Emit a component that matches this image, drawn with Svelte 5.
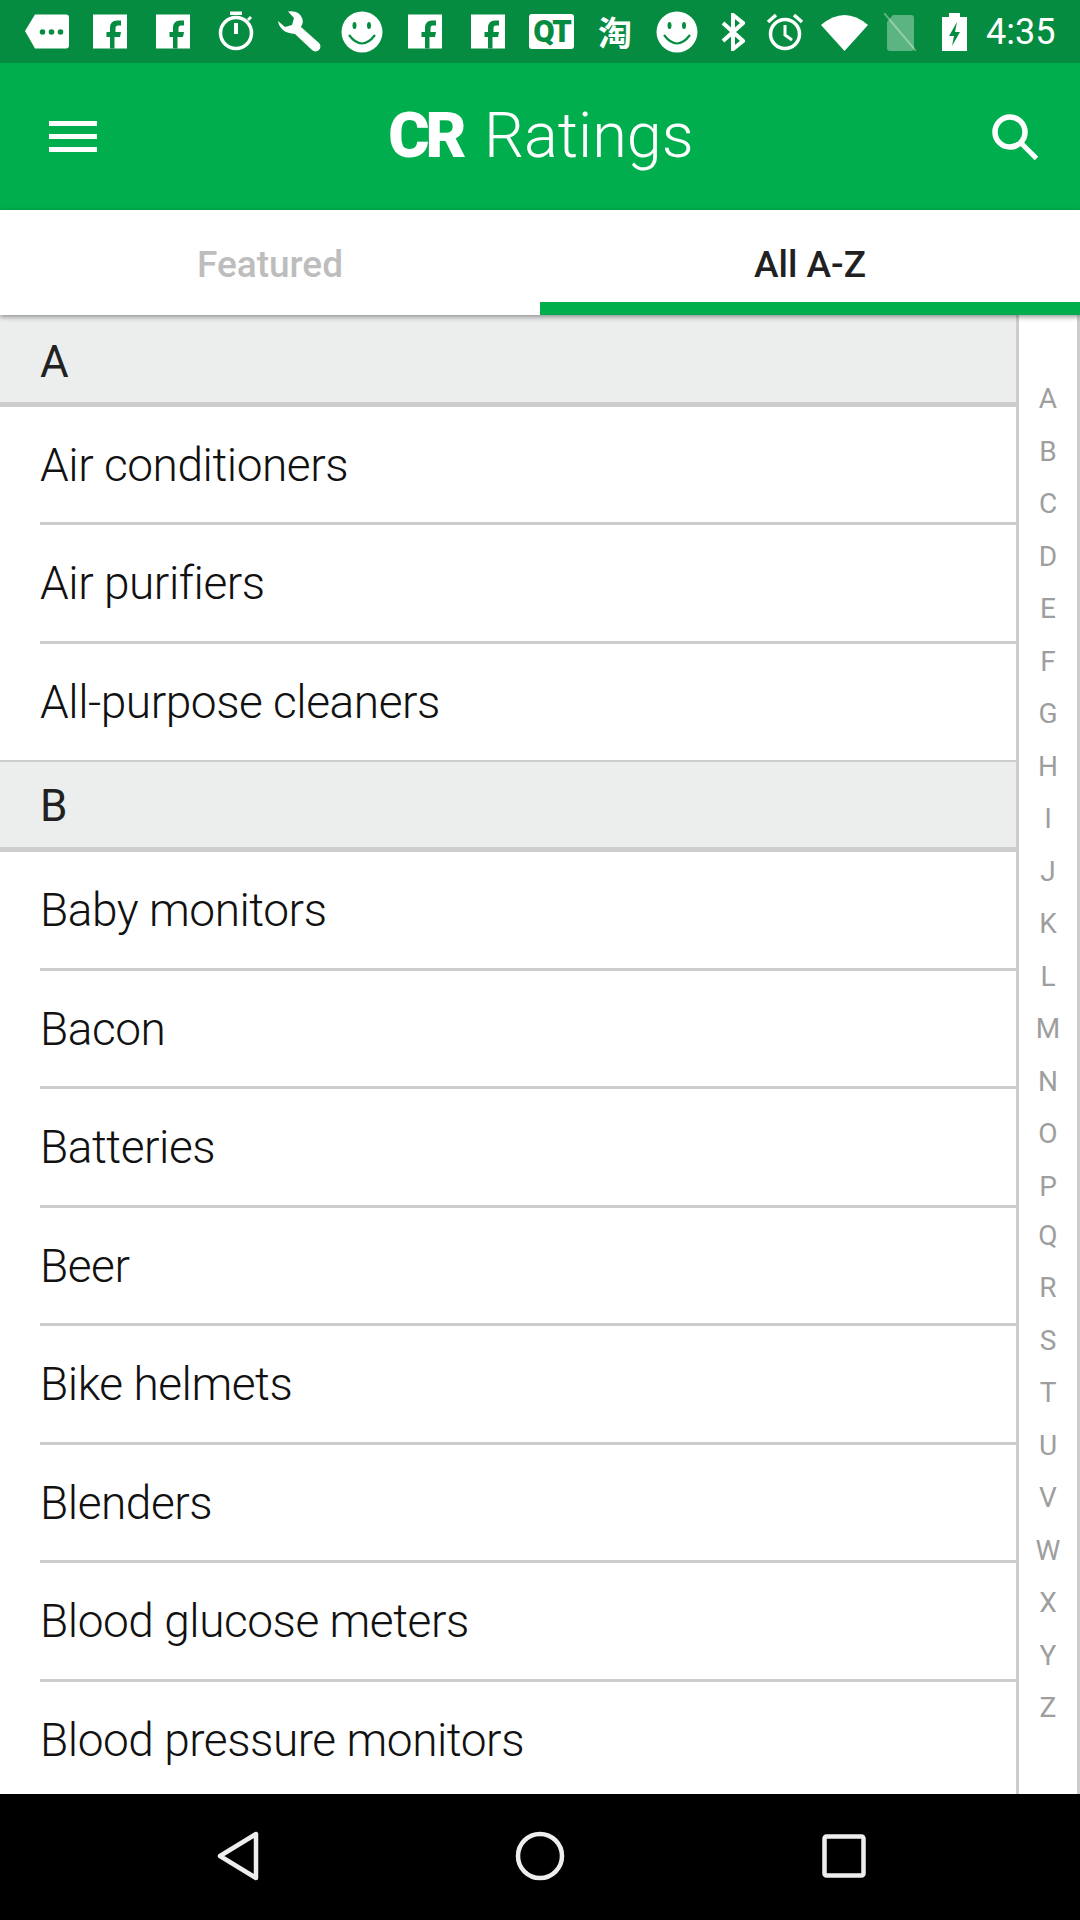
<script lang="ts">
	const letters = 'ABCDEFGHIJKLMNOPQRSTUVWXYZ'.split('');

	const sections = [
		{ title: 'A', items: ['Air conditioners', 'Air purifiers', 'All-purpose cleaners'] },
		{
			title: 'B',
			items: [
				'Baby monitors',
				'Bacon',
				'Batteries',
				'Beer',
				'Bike helmets',
				'Blenders',
				'Blood glucose meters',
				'Blood pressure monitors'
			]
		}
	];

	const fPath =
		'M22 38.5V27h-3.5v-5H22v-4q0-7.5 7-7.5h4v5h-3q-2.5 0-2.5 2.5V22H33l-1 5h-5.500V38.500Z';
</script>

{#snippet fb()}
	<svg class="slot" viewBox="0 0 44 44">
		<rect x="5" y="4.500" width="34" height="34" fill="#fff" />
		<path d={fPath} fill="#068c40" />
	</svg>
{/snippet}

{#snippet smile(cls = 'slot')}
	<svg class={cls} viewBox="0 0 44 44">
		<circle cx="22" cy="22" r="20.500" fill="#fff" />
		<ellipse cx="14.500" cy="15.500" rx="2" ry="3.500" fill="#068c40" />
		<ellipse cx="29" cy="15.500" rx="2" ry="3.500" fill="#068c40" />
		<path d="M9 25Q22 42 35 25" fill="none" stroke="#068c40" stroke-width="2.200" />
	</svg>
{/snippet}

<div class="screen">
	<div class="status">
		<svg class="slot" viewBox="0 0 44 44">
			<path d="M10 4.500h31a3 3 0 0 1 3 3v28a3 3 0 0 1-3 3H10L0 21Z" fill="#fff" />
			<circle cx="17.500" cy="22" r="2.800" fill="#068c40" />
			<circle cx="26.500" cy="22" r="2.800" fill="#068c40" />
			<circle cx="35.500" cy="22" r="2.800" fill="#068c40" />
		</svg>
		{@render fb()}
		{@render fb()}
		<svg class="slot" viewBox="0 0 44 44">
			<rect x="16" y="1.500" width="12" height="3.500" fill="#fff" />
			<path d="M33 9l3-3 2 2-3 3Z" fill="#fff" />
			<circle cx="22" cy="23" r="15.500" fill="none" stroke="#fff" stroke-width="3.500" />
			<rect x="20" y="13" width="4" height="11" fill="#fff" />
		</svg>
		<svg class="slot" viewBox="0 0 44 44">
			<path
				d="M11 1.500Q22 0 25 8q2 5-1 9l18 16a4.500 4.500 0 0 1-7 7L18 24Q3 23 1 11l7 6 7-2 2-7Z"
				fill="#fff"
			/>
		</svg>
		{@render smile()}
		{@render fb()}
		{@render fb()}
		<span class="qt">QT</span>
		<span class="tao">淘</span>
		{@render smile('slot smile-right')}
		<svg class="bt" viewBox="0 0 24 38">
			<path d="M2 10l20 18-10 8V2l10 8L2 28" fill="none" stroke="#fff" stroke-width="4" />
		</svg>
		<svg class="alarm" viewBox="0 0 38 38">
			<circle cx="19" cy="21" r="14.500" fill="none" stroke="#fff" stroke-width="3.500" />
			<path d="M19 12v10l7 5" fill="none" stroke="#fff" stroke-width="3" />
			<path d="M2 9l8-7M36 9l-8-7" stroke="#fff" stroke-width="3.500" />
		</svg>
		<svg class="wifi" viewBox="0 0 47 38">
			<path d="M0 12Q23.500-8 47 12L23.500 38Z" fill="#fff" />
		</svg>
		<svg class="sim" viewBox="0 0 32 38">
			<path d="M9 2h18a3 3 0 0 1 3 3v30a3 3 0 0 1-3 3H6a3 3 0 0 1-3-3V9Z" fill="#fff" opacity="0.35" />
			<path d="M0 0l32 38" stroke="#fff" stroke-width="2" opacity="0.35" />
		</svg>
		<svg class="batt" viewBox="0 0 25 38">
			<path d="M7 0h11v4h7v34H0V4h7Z" fill="#fff" />
			<path d="M15 9l-8 14h5l-2 10 8-14h-5Z" fill="#068c40" />
		</svg>
		<span class="time">4:35</span>
	</div>

	<header class="appbar">
		<button class="menu" aria-label="Menu">
			<span></span><span></span><span></span>
		</button>
		<div class="title"><b>CR</b> Ratings</div>
		<svg class="search" viewBox="0 0 48 48">
			<circle cx="19" cy="19" r="15" fill="none" stroke="#fff" stroke-width="5.500" />
			<path d="M29.500 29.500l16 16" stroke="#fff" stroke-width="5" />
		</svg>
	</header>

	<nav class="tabs">
		<div class="tab">Featured</div>
		<div class="tab active">All A-Z</div>
	</nav>

	<main class="content">
		<div class="list">
			{#each sections as section}
				<div class="section-head">{section.title}</div>
				{#each section.items as item}
					<div class="row"><span>{item}</span></div>
				{/each}
			{/each}
		</div>
		<aside class="index">
			{#each letters as letter}
				<span>{letter}</span>
			{/each}
		</aside>
	</main>

	<footer class="navbar">
		<svg class="back" viewBox="0 0 42 50">
			<path d="M39 3v44L3 25Z" fill="none" stroke="#eee" stroke-width="4.500" stroke-linejoin="round" />
		</svg>
		<svg class="home" viewBox="0 0 50 50">
			<circle cx="25" cy="25" r="22" fill="none" stroke="#eee" stroke-width="4.500" />
		</svg>
		<svg class="recent" viewBox="0 0 44 44">
			<rect x="2.500" y="2.500" width="39" height="39" rx="2" fill="none" stroke="#eee" stroke-width="4.500" />
		</svg>
	</footer>
</div>

<style>
	:global(body) {
		margin: 0;
		background: #fff;
	}

	.screen {
		width: 1080px;
		height: 1920px;
		display: flex;
		flex-direction: column;
		overflow: hidden;
		font-family: Roboto, 'Liberation Sans', sans-serif;
	}

	.status {
		height: 63px;
		flex: none;
		background: #068c40;
		display: flex;
		align-items: center;
		padding-left: 25px;
		color: #fff;
	}

	.slot {
		width: 44px;
		height: 44px;
		margin-right: 19px;
		flex: none;
	}

	.qt {
		width: 45px;
		height: 35px;
		margin-right: 24px;
		background: #fff;
		border-radius: 3px;
		color: #068c40;
		font-size: 31px;
		font-weight: 900;
		line-height: 35px;
		letter-spacing: -2px;
		text-align: center;
		overflow: hidden;
	}

	.tao {
		width: 34px;
		margin-right: 23px;
		font-family: 'Noto Sans CJK SC', sans-serif;
		font-size: 34px;
		font-weight: 700;
		line-height: 38px;
	}

	.smile-right {
		margin-right: 22px;
	}

	.bt {
		width: 24px;
		height: 38px;
		margin-right: 21px;
	}

	.alarm {
		width: 38px;
		height: 38px;
		margin-right: 17px;
	}

	.wifi {
		width: 47px;
		height: 38px;
		margin-right: 16px;
	}

	.sim {
		width: 32px;
		height: 38px;
		margin-right: 26px;
	}

	.batt {
		width: 25px;
		height: 38px;
		margin-right: 19px;
	}

	.time {
		font-size: 36px;
		line-height: 38px;
	}

	.appbar {
		height: 147px;
		flex: none;
		background: #00ae4d;
		display: flex;
		align-items: center;
		justify-content: space-between;
		padding: 0 41px 0 49px;
		color: #fff;
	}

	.menu {
		width: 48px;
		height: 31px;
		padding: 0;
		border: 0;
		background: none;
		display: flex;
		flex-direction: column;
		justify-content: space-between;
	}

	.menu span {
		height: 5px;
		background: #fff;
	}

	.title {
		font-size: 63px;
		font-weight: 300;
		line-height: 70px;
		margin: -2px 0 0 -6px;
	}

	.title b {
		font-weight: 900;
		letter-spacing: -4px;
		margin-right: 6px;
	}

	.search {
		width: 48px;
		height: 48px;
	}

	.tabs {
		height: 105px;
		flex: none;
		background: #fff;
		display: flex;
		box-shadow: 0 2px 5px rgba(0, 0, 0, 0.4);
		position: relative;
		z-index: 1;
	}

	.tab {
		flex: 1;
		box-sizing: border-box;
		padding-top: 33px;
		text-align: center;
		font-size: 37px;
		font-weight: 500;
		line-height: 44px;
		color: #bdbdbd;
	}

	.tab.active {
		color: #212121;
		border-bottom: 13px solid #00ae4d;
	}

	.content {
		flex: 1;
		min-height: 0;
		display: flex;
		overflow: hidden;
	}

	.list {
		width: 1016px;
		flex: none;
	}

	.section-head {
		height: 86.500px;
		background: #eceeed;
		border-bottom: 5px solid #cdcdcd;
		padding-left: 40px;
		font-size: 44px;
		line-height: 95px;
		color: #212121;
	}

	.row + .section-head {
		height: 85px;
		line-height: 88px;
	}

	.row {
		height: 118.500px;
		box-sizing: border-box;
		padding-left: 40px;
	}

	.row span {
		display: block;
		height: 100%;
		box-sizing: border-box;
		border-bottom: 3px solid #cdcdcd;
		font-size: 46px;
		font-weight: 300;
		letter-spacing: -0.45px;
		line-height: 117px;
		color: #111;
	}

	.row:has(+ .section-head) {
		padding-left: 0;
	}

	.row:has(+ .section-head) span {
		padding-left: 40px;
		border-bottom-width: 2px;
	}

	.index {
		flex: 1;
		border-left: 3px solid #cdcdcd;
		border-right: 3px solid #cdcdcd;
		padding-top: 58px;
		display: flex;
		flex-direction: column;
		align-items: center;
		font-size: 28px;
		color: #9e9e9e;
	}

	.index span {
		height: 52.500px;
		line-height: 52.500px;
	}

	.index span:nth-child(17) {
		margin-top: -3.500px;
	}

	.navbar {
		height: 126px;
		flex: none;
		background: #000;
		display: flex;
		align-items: center;
		position: relative;
		padding-left: 217px;
	}

	.back {
		width: 42px;
		height: 50px;
		margin-right: 256px;
		margin-top: -2px;
	}

	.home {
		width: 50px;
		height: 50px;
		margin-right: 257px;
		margin-top: -2px;
	}

	.recent {
		width: 44px;
		height: 44px;
		margin-top: -2px;
	}
</style>
